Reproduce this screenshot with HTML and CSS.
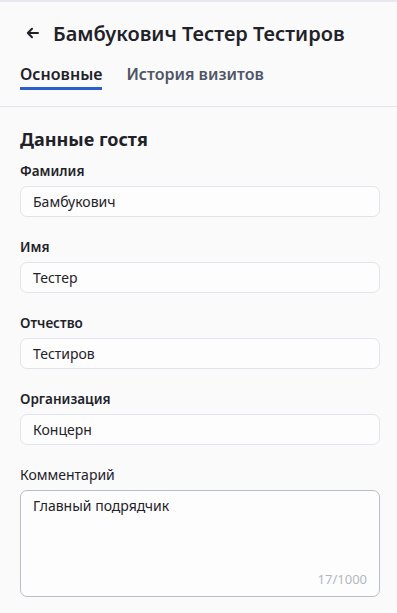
FILE: index.html
```html
<!DOCTYPE html>
<html lang="ru">
<head>
    <meta charset="UTF-8">
    <meta name="viewport" content="width=device-width, initial-scale=1.0">
    <title>Гость</title>
    <link rel="stylesheet" href="styles.css">
</head>
<body>
    <div class="page">
        <div class="header">
            <div class="title-row">
                <span class="back">
                    <svg width="13" height="12" viewBox="0 0 13 12">
                        <path d="M12 6H1.8M6 1.8L1.8 6 6 10.2" fill="none" stroke="#1f2229" stroke-width="2" stroke-linecap="round" stroke-linejoin="round"/>
                    </svg>
                </span>
                <h1>Бамбукович Тестер Тестиров</h1>
            </div>
            <div class="tabs">
                <div class="tab active">Основные</div>
                <div class="tab">История визитов</div>
            </div>
        </div>

        <div class="content">
            <h2>Данные гостя</h2>

            <div class="field">
                <label>Фамилия</label>
                <div class="input">Бамбукович</div>
            </div>
            <div class="field">
                <label>Имя</label>
                <div class="input">Тестер</div>
            </div>
            <div class="field">
                <label>Отчество</label>
                <div class="input">Тестиров</div>
            </div>
            <div class="field">
                <label>Организация</label>
                <div class="input">Концерн</div>
            </div>
            <div class="field">
                <label class="regular">Комментарий</label>
                <div class="textarea">
                    <div class="textarea-text">Главный подрядчик</div>
                    <div class="counter">17/1000</div>
                </div>
            </div>
        </div>
    </div>
</body>
</html>
```

FILE: styles.css
```css
body {
    margin: 0;
    font-family: "Noto Sans", "Open Sans", sans-serif;
    background-color: #fafafb;
    color: #1f2229;
}
.page {
    border-top: 2px solid #e6e8ee;
}
.header {
    padding: 0 17px 0 20px;
    border-bottom: 1px solid #e3e5ea;
}
.title-row {
    display: flex;
    align-items: center;
    height: 61px;
    padding-top: 1px;
    box-sizing: border-box;
}
.back {
    display: flex;
    width: 13px;
    margin-left: 6px;
    margin-right: 14px;
}
h1 {
    margin: 0;
    font-size: 20px;
    font-weight: 600;
    color: #1f2229;
}
.tabs {
    display: flex;
    gap: 24px;
}
.tab {
    font-size: 16px;
    font-weight: 600;
    color: #4f5667;
    padding: 0 0 2px;
    line-height: 22px;
    border-bottom: 3px solid transparent;
    margin-bottom: 16px;
}
.tab.active {
    color: #1f2229;
    border-bottom-color: #2b5fcf;
}
.content {
    padding: 19px 17px 0 20px;
}
h2 {
    margin: 0 0 10px;
    font-size: 18px;
    font-weight: 700;
    line-height: 26px;
}
.field {
    margin-bottom: 21px;
}
label {
    display: block;
    font-size: 13.5px;
    font-weight: 600;
    line-height: 18px;
    margin-bottom: 6px;
}
label.regular {
    font-weight: 400;
    font-size: 14px;
}
.input {
    height: 31px;
    box-sizing: border-box;
    border: 1px solid #e2e4ec;
    border-radius: 7px;
    background: #fdfdfd;
    padding: 0 12px;
    font-size: 14px;
    line-height: 29px;
}
.textarea {
    height: 107px;
    box-sizing: border-box;
    border: 1px solid #b9bdc9;
    border-radius: 7px;
    background: #fdfdfd;
    padding: 5px 12px 8px;
    display: flex;
    flex-direction: column;
    justify-content: space-between;
    font-size: 14px;
}
.counter {
    align-self: flex-end;
    color: #b3b7c2;
    font-size: 13px;
}
```
